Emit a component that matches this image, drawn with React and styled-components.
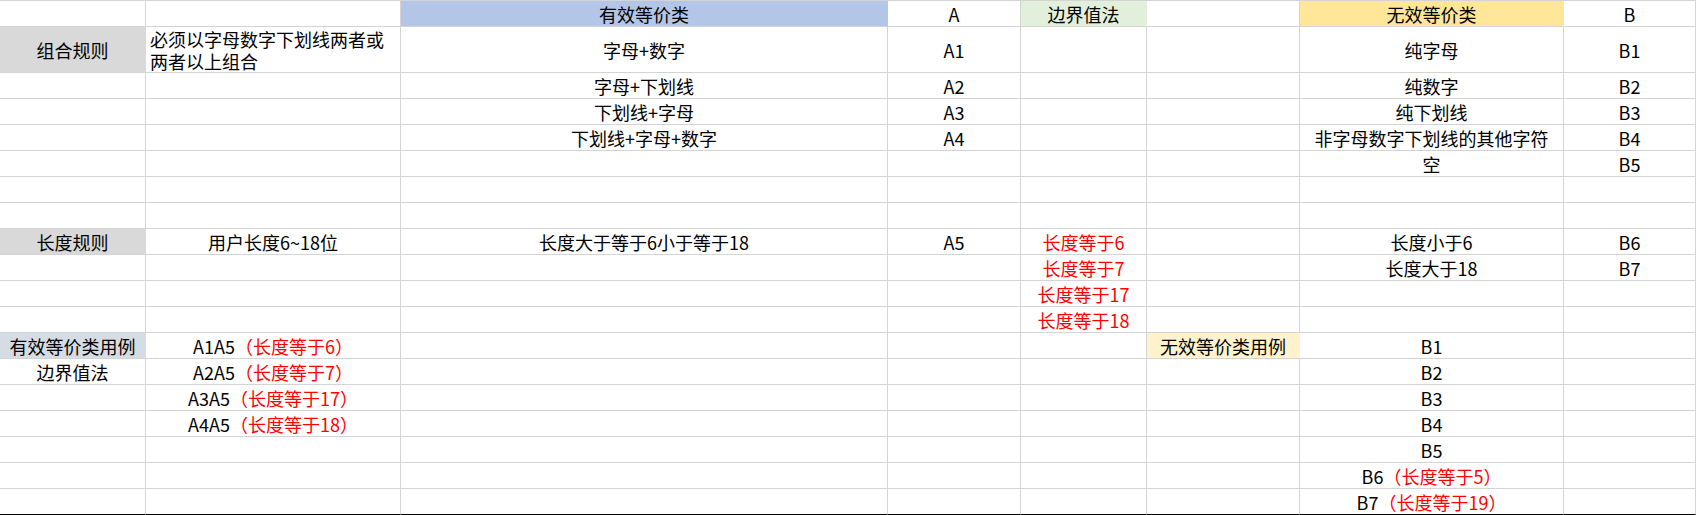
import React from "react";
import { styled, createGlobalStyle } from "styled-components";

const GlobalStyle = createGlobalStyle`
  html, body {
    margin: 0;
    padding: 0;
    background: #ffffff;
  }
  body {
    font-family: "Noto Sans CJK SC", "Noto Sans", sans-serif;
  }
`;

const fills = {
  blue: "#b4c6e7",
  green: "#e2efda",
  yellow: "#ffe699",
  gray: "#d9d9d9",
  slate: "#d6dce4",
  cream: "#fff2cc",
};

const Sheet = styled.div`
  display: grid;
  grid-template-columns: 146px 255px 487px 133px 126px 153px 264px 132px;
  grid-template-rows: 26px 46px repeat(17, 26px);
  width: 1696px;
  border-top: 1px solid #d4d4d4;
  color: #000000;
  font-size: 18px;
`;

const Cell = styled.div`
  box-sizing: border-box;
  display: flex;
  align-items: center;
  justify-content: ${(p) => (p.$left ? "flex-start" : "center")};
  padding: ${(p) => (p.$left ? "1px 4px 0" : "1px 2px 0")};
  border-right: 1px solid ${(p) => (p.$fill ? fills[p.$fill] : "#d4d4d4")};
  border-bottom: 1px solid ${(p) => (p.$last ? "#000000" : "#d4d4d4")};
  background: ${(p) => (p.$fill ? fills[p.$fill] : "transparent")};
  color: ${(p) => (p.$red ? "#ff0000" : "inherit")};
  white-space: ${(p) => (p.$wrap ? "normal" : "nowrap")};
  line-height: 22px;
  overflow: hidden;
`;

const Red = styled.span`
  color: #ff0000;
`;

const withNote = (code, note) => (
  <>
    {code}
    <Red>（{note}）</Red>
  </>
);

// each row: 8 columns, entries are text or { t, fill, red, left, wrap }
const rows = [
  ["", "", { t: "有效等价类", fill: "blue" }, "A", { t: "边界值法", fill: "green" }, "", { t: "无效等价类", fill: "yellow" }, "B"],
  [
    { t: "组合规则", fill: "gray" },
    { t: "必须以字母数字下划线两者或两者以上组合", left: true, wrap: true },
    "字母+数字", "A1", "", "", "纯字母", "B1",
  ],
  ["", "", "字母+下划线", "A2", "", "", "纯数字", "B2"],
  ["", "", "下划线+字母", "A3", "", "", "纯下划线", "B3"],
  ["", "", "下划线+字母+数字", "A4", "", "", "非字母数字下划线的其他字符", "B4"],
  ["", "", "", "", "", "", "空", "B5"],
  ["", "", "", "", "", "", "", ""],
  ["", "", "", "", "", "", "", ""],
  [
    { t: "长度规则", fill: "gray" }, "用户长度6~18位", "长度大于等于6小于等于18", "A5",
    { t: "长度等于6", red: true }, "", "长度小于6", "B6",
  ],
  ["", "", "", "", { t: "长度等于7", red: true }, "", "长度大于18", "B7"],
  ["", "", "", "", { t: "长度等于17", red: true }, "", "", ""],
  ["", "", "", "", { t: "长度等于18", red: true }, "", "", ""],
  [
    { t: "有效等价类用例", fill: "slate" }, withNote("A1A5", "长度等于6"), "", "", "",
    { t: "无效等价类用例", fill: "cream" }, "B1", "",
  ],
  ["边界值法", withNote("A2A5", "长度等于7"), "", "", "", "", "B2", ""],
  ["", withNote("A3A5", "长度等于17"), "", "", "", "", "B3", ""],
  ["", withNote("A4A5", "长度等于18"), "", "", "", "", "B4", ""],
  ["", "", "", "", "", "", "B5", ""],
  ["", "", "", "", "", "", withNote("B6", "长度等于5"), ""],
  ["", "", "", "", "", "", withNote("B7", "长度等于19"), ""],
];

const isSpec = (v) => v && typeof v === "object" && "t" in v;

export default function App() {
  return (
    <>
      <GlobalStyle />
      <Sheet>
        {rows.map((row, r) =>
          row.map((v, c) => {
            const spec = isSpec(v) ? v : { t: v };
            return (
              <Cell
                key={`${r}-${c}`}
                $fill={spec.fill}
                $red={spec.red}
                $left={spec.left}
                $wrap={spec.wrap}
                $last={r === rows.length - 1}
              >
                {spec.t}
              </Cell>
            );
          })
        )}
      </Sheet>
    </>
  );
}
